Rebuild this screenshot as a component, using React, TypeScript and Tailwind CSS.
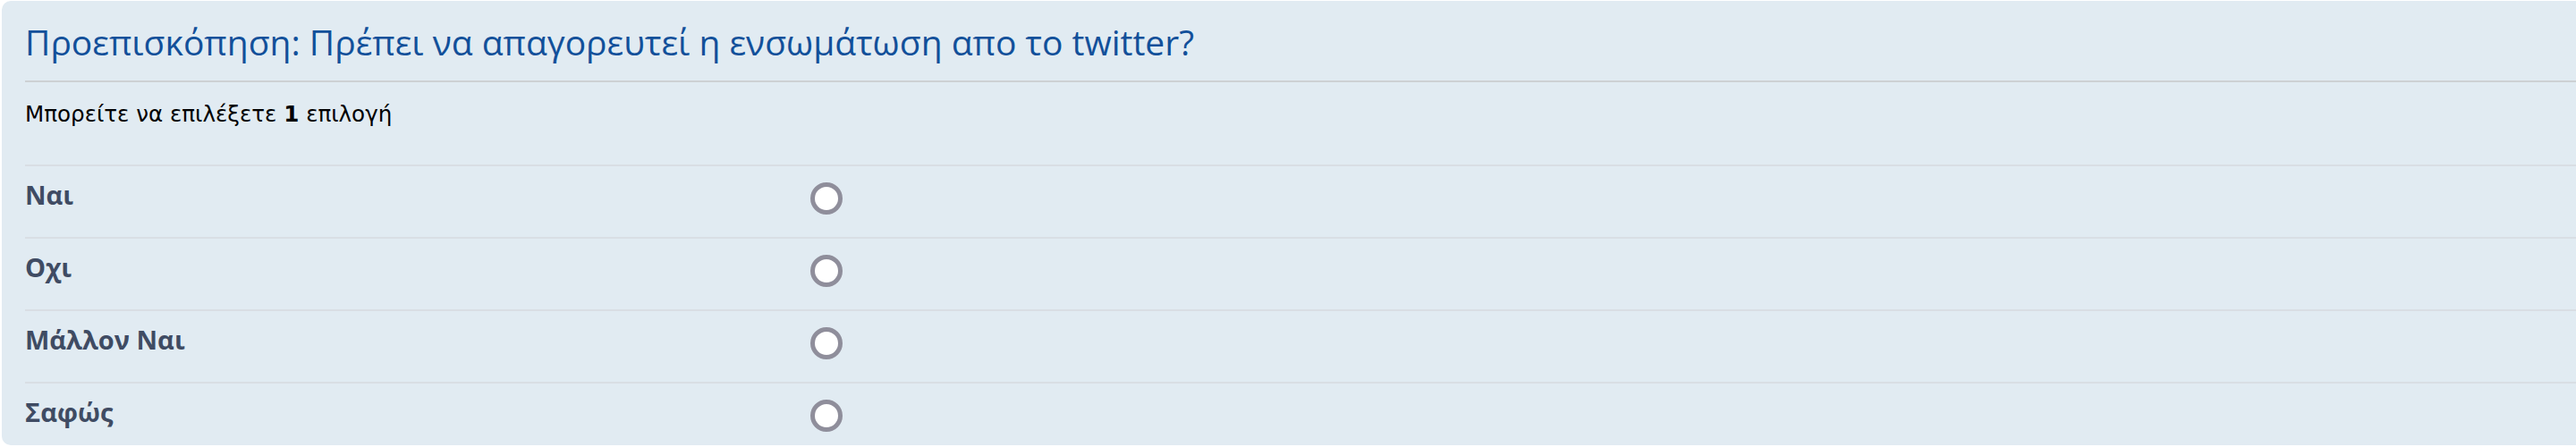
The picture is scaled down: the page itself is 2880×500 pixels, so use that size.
import React from "react";

const options = ["Ναι", "Οχι", "Μάλλον Ναι", "Σαφώς"];

function Radio() {
  return (
    <span className="block w-[36px] h-[36px] rounded-full border-[5px] border-[#8f8e9b] bg-white" />
  );
}

export default function App() {
  return (
    <div className="w-[2880px] h-[500px] overflow-hidden bg-white">
      <div className="ml-[2px] mt-[1px] w-[2900px] h-[497px] rounded-[10px] bg-[#e1ebf2] pl-[26px]">
        <h2 className="h-[91px] border-b-2 border-[#cdd1d4] pt-[22px] text-[39px] leading-[48px] text-[#12509a] font-['Open_Sans','Noto_Sans',sans-serif]">
          Προεπισκόπηση: Πρέπει να απαγορευτεί η ενσωμάτωση απο το twitter?
        </h2>
        <p className="h-[92px] pt-[21px] text-[24.6px] leading-[30px] text-black font-['DejaVu_Sans',Verdana,sans-serif]">
          Μπορείτε να επιλέξετε <strong>1</strong> επιλογή
        </p>
        {options.map((o) => (
          <div key={o} className="flex h-[81px] border-t-2 border-[#d9dee4]">
            <div className="w-[878px] pt-[14px] text-[29px] leading-[36px] font-bold font-stretch-[90%] text-[#3f4b63] font-['Open_Sans','Noto_Sans',sans-serif]">
              {o}
            </div>
            <div className="pt-[18px]">
              <Radio />
            </div>
          </div>
        ))}
      </div>
    </div>
  );
}
